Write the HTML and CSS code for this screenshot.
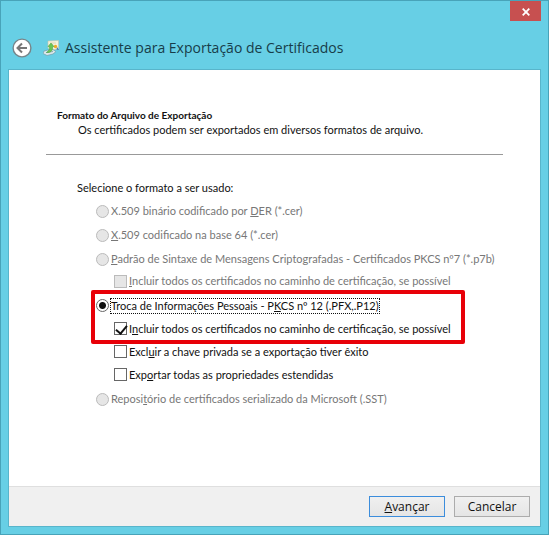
FILE: index.html
```html
<!DOCTYPE html>
<html lang="pt-BR">
<head>
    <meta charset="utf-8">
    <title>Assistente para Exportação de Certificados</title>
    <meta name="viewport" content="width=device-width, initial-scale=1">
    <link rel="stylesheet" href="styles.css">
</head>
<body>

    <form class="window">
        <header class="titlebar">
            <button type="button" class="back" aria-label="Voltar">
                <svg width="20" height="20" viewBox="0 0 20 20">
                    <circle cx="10" cy="10" r="8.9" fill="#fff" stroke="#76858a" stroke-width="1.4"/>
                    <path d="M15 10H6M10 5.5L5.5 10L10 14.5" fill="none" stroke="#777" stroke-width="2"/>
                </svg>
            </button>
            <svg class="cert-icon" width="17" height="17" viewBox="0 0 17 17">
                <path d="M5 1L15.500 .5V9L8 10L5 8Z" fill="#f4f1dc" stroke="#c9c6a4" stroke-width=".6"/>
                <path d="M7 3H13M7 5H10" stroke="#d8d2ab" stroke-width=".8"/>
                <circle cx="12.500" cy="6.500" r="1.700" fill="#efab25"/>
                <path d="M14 7L16 10L13.500 9.500Z" fill="#356fb5"/>
                <path d="M1 11L9 9L13 11.500L10 14L4 15.500L0 13.500Z" fill="#dce8ea" stroke="#6f9fae" stroke-width=".7"/>
                <path d="M3 12.500L10 11.500" stroke="#8babb5"/>
                <path d="M3.500 12.500C7.500 13 10 10.500 9.500 7L11 6.500L8 3L5 6.500L6.500 7C7 9 6 10.500 3.500 12.500Z" fill="#6cc653" stroke="#419d3c" stroke-width=".5"/>
            </svg>
            <h1>Assistente para Exportação de Certificados</h1>
            <button type="button" class="close" aria-label="Fechar">
                <svg width="8" height="8" viewBox="0 0 8 8">
                    <path d="M.7 .7L7.300 7.300M7.300 .7L.7 7.300" stroke="#fff" stroke-width="1.800"/>
                </svg>
            </button>
        </header>

        <main class="panel">
            <div class="page">
                <div class="heading">
                    <h2>Formato do Arquivo de Exportação</h2>
                    <p>Os certificados podem ser exportados em diversos formatos de arquivo.</p>
                </div>

                <fieldset class="formats">
                    <legend>Selecione o formato a ser usado:</legend>

                    <div class="group">
                        <div class="row">
                            <input type="radio" name="format" id="der" disabled>
                            <label for="der">X.509 binário codificado por <u>D</u>ER (*.cer)</label>
                        </div>
                    </div>

                    <div class="group">
                        <div class="row">
                            <input type="radio" name="format" id="base64" disabled>
                            <label for="base64"><u>X</u>.509 codificado na base 64 (*.cer)</label>
                        </div>
                    </div>

                    <div class="group">
                        <div class="row">
                            <input type="radio" name="format" id="p7b" disabled>
                            <label for="p7b"><u>P</u>adrão de Sintaxe de Mensagens Criptografadas - Certificados PKCS nº7 (*.p7b)</label>
                        </div>
                        <div class="row sub">
                            <input type="checkbox" id="p7bChain" disabled>
                            <label for="p7bChain"><u>I</u>ncluir todos os certificados no caminho de certificação, se possível</label>
                        </div>
                    </div>

                    <div class="group pfx">
                        <div class="highlight">
                            <div class="row">
                                <input type="radio" name="format" id="pfx" checked>
                                <label for="pfx" class="focused">Troca de Informações Pessoais - P<u>K</u>CS nº 12 (.PFX,.P12)</label>
                            </div>
                            <div class="row sub">
                                <input type="checkbox" id="pfxChain" checked>
                                <label for="pfxChain">I<u>n</u>cluir todos os certificados no caminho de certificação, se possível</label>
                            </div>
                        </div>
                        <div class="row sub">
                            <input type="checkbox" id="deleteKey">
                            <label for="deleteKey">Excl<u>u</u>ir a chave privada se a exportação tiver êxito</label>
                        </div>
                        <div class="row sub">
                            <input type="checkbox" id="extended">
                            <label for="extended">Exp<u>o</u>rtar todas as propriedades estendidas</label>
                        </div>
                    </div>

                    <div class="group">
                        <div class="row">
                            <input type="radio" name="format" id="sst" disabled>
                            <label for="sst">Reposi<u>t</u>ório de certificados serializado da Microsoft (.SST)</label>
                        </div>
                    </div>
                </fieldset>
            </div>

            <footer class="actions">
                <button type="button" class="default"><u>A</u>vançar</button>
                <button type="button">Cancelar</button>
            </footer>
        </main>
    </form>

</body>
</html>
```
FILE: styles.css
```css
* {
    box-sizing: border-box;
}

body {
    margin: 0;
    font-family: Lato, "Noto Sans", sans-serif;
    font-size: 11px;
    line-height: 14px;
    color: #111;
}

.window {
    display: flex;
    flex-direction: column;
    min-height: 100vh;
    padding: 0 7px 7px;
    background: #67cfe5;
    border: 1px solid #48a3b9;
}

/* title bar */

.titlebar {
    display: flex;
    align-items: center;
    height: 68px;
    padding: 26px 0 0 4px;
}

.titlebar h1 {
    margin: 0 0 0 5px;
    font-family: "Open Sans", "Noto Sans", sans-serif;
    font-size: 14px;
    font-weight: normal;
    line-height: 20px;
    color: #173d49;
}

.back {
    display: flex;
    padding: 0;
    border: none;
    background: none;
}

.cert-icon {
    margin-left: 11px;
}

.close {
    display: flex;
    align-items: center;
    justify-content: center;
    align-self: flex-start;
    width: 31px;
    height: 20px;
    margin: -26px 0 0 auto;
    padding: 2px 0 0;
    border: none;
    background: #c75050;
}

/* wizard page */

.panel {
    display: flex;
    flex-direction: column;
    flex: 1;
    background: #fff;
    border: 1px solid #58b5cb;
}

.page {
    flex: 1;
    padding: 38px 37px 20px;
}

.heading {
    padding: 0 0 16px 11px;
    border-bottom: 1px solid #999;
}

.heading h2 {
    margin: 0;
    font-size: 10px;
    font-weight: bold;
    line-height: 14px;
}

.heading p {
    margin: 0 0 0 21px;
    line-height: 16px;
}

.formats {
    margin: 25px 0 0 31px;
    padding: 0;
    border: none;
}

.formats legend {
    margin-bottom: 4px;
    padding: 0;
    line-height: 16px;
}

.group {
    margin-left: 19px;
    margin-bottom: 2px;
}

.row {
    display: flex;
    align-items: center;
    height: 22px;
    white-space: nowrap;
}

.pfx .row {
    height: 23px;
}

.sub {
    margin-left: 18px;
}

.row label {
    margin-left: 2px;
}

.row input:disabled + label {
    color: #777;
}

input[type="radio"],
input[type="checkbox"] {
    appearance: none;
    flex: none;
    width: 13px;
    height: 13px;
    margin: 0;
    background: #fff;
    border: 1px solid #666;
}

input[type="radio"] {
    border-radius: 50%;
}

input:disabled {
    background: #e6e6e6;
    border-color: #bbb;
}

input[type="radio"]:checked {
    background: radial-gradient(circle, #111 3px, #fff 4px);
}

input[type="checkbox"]:checked::before {
    content: "";
    display: block;
    width: 5px;
    height: 9px;
    margin-left: 3px;
    border: solid #111;
    border-width: 0 2px 2px 0;
    transform: rotate(40deg);
}

.row .focused {
    outline: 1px dotted #111;
}

.highlight {
    position: relative;
    width: fit-content;
}

/* red frame drawn over the chosen format */
.highlight::after {
    content: "";
    position: absolute;
    inset: -4px -14px -4px -5px;
    border: 4px solid #e80008;
    border-radius: 2px;
    pointer-events: none;
}

/* buttons */

.actions {
    display: flex;
    justify-content: flex-end;
    gap: 9px;
    padding: 9px 10px 9px 11px;
    background: #f0f0f0;
    border-top: 1px solid #dfdfdf;
}

.actions button {
    width: 76px;
    height: 21px;
    padding: 0;
    font-family: "Open Sans", "Noto Sans", sans-serif;
    font-size: 12px;
    line-height: 16px;
    color: #111;
    background: linear-gradient(#f0f0f0, #e5e5e5);
    border: 1px solid #acacac;
}

.actions .default {
    border-color: #3c8ddc;
}
```
